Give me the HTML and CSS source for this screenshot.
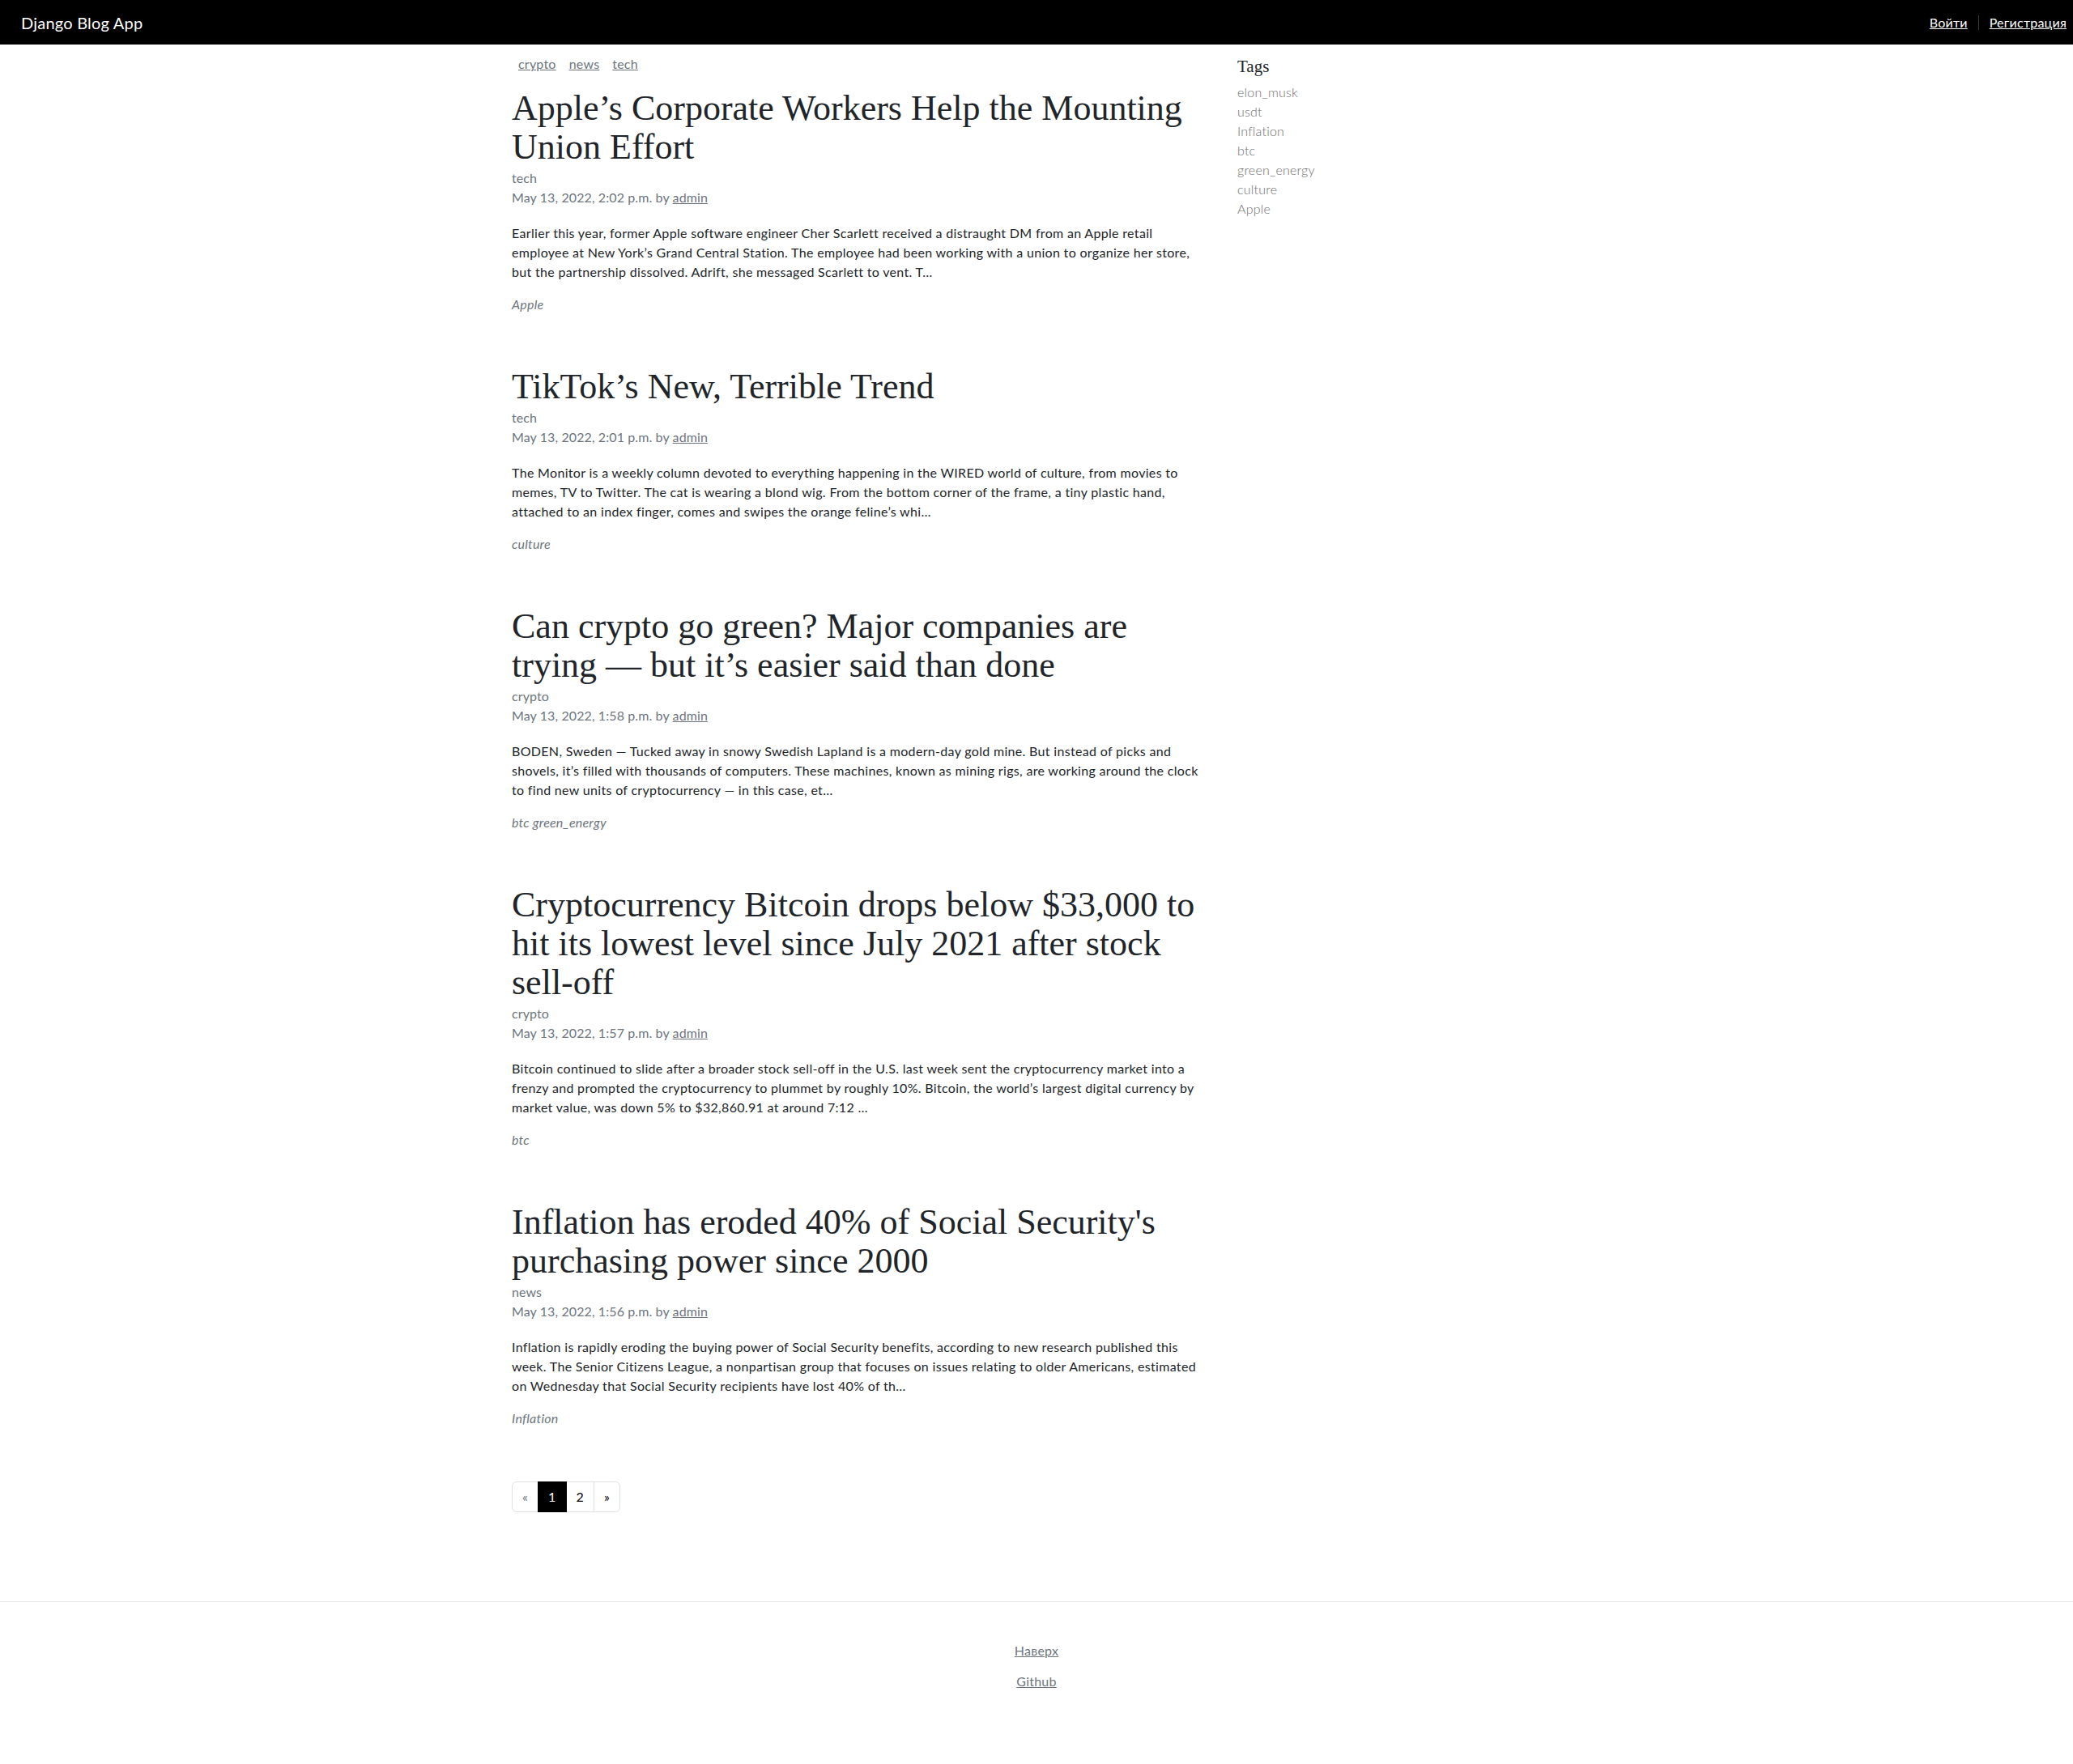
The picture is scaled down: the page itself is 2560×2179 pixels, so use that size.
FILE: index.html
```html
<!DOCTYPE html>
<html lang="ru">
<head>
<meta charset="utf-8">
<title>Django Blog App</title>
<link rel="stylesheet" href="styles.css">
</head>
<body>
<header class="topbar">
  <a class="brand" href="#">Django Blog App</a>
  <div class="auth">
    <a href="#" class="auth-link">Войти</a>
    <span class="auth-sep"></span>
    <a href="#" class="auth-link">Регистрация</a>
  </div>
</header>

<div class="layout">
  <div class="main-col">
    <nav class="catnav">
      <a href="#">crypto</a>
      <a href="#">news</a>
      <a href="#">tech</a>
    </nav>

    <div class="posts">
      <article class="post">
        <h2 class="post-title">Apple’s Corporate Workers Help the Mounting Union Effort</h2>
        <div class="post-cat">tech</div>
        <p class="post-meta">May 13, 2022, 2:02 p.m. by <a href="#">admin</a></p>
        <p class="post-excerpt">Earlier this year, former Apple software engineer Cher Scarlett received a distraught DM from an Apple retail employee at New York’s Grand Central Station. The employee had been working with a union to organize her store, but the partnership dissolved. Adrift, she messaged Scarlett to vent. T…</p>
        <p class="post-tags">Apple</p>
      </article>

      <article class="post">
        <h2 class="post-title">TikTok’s New, Terrible Trend</h2>
        <div class="post-cat">tech</div>
        <p class="post-meta">May 13, 2022, 2:01 p.m. by <a href="#">admin</a></p>
        <p class="post-excerpt">The Monitor is a weekly column devoted to everything happening in the WIRED world of culture, from movies to memes, TV to Twitter. The cat is wearing a blond wig. From the bottom corner of the frame, a tiny plastic hand, attached to an index finger, comes and swipes the orange feline’s whi…</p>
        <p class="post-tags">culture</p>
      </article>

      <article class="post">
        <h2 class="post-title">Can crypto go green? Major companies are trying — but it’s easier said than done</h2>
        <div class="post-cat">crypto</div>
        <p class="post-meta">May 13, 2022, 1:58 p.m. by <a href="#">admin</a></p>
        <p class="post-excerpt">BODEN, Sweden — Tucked away in snowy Swedish Lapland is a modern-day gold mine. But instead of picks and shovels, it’s filled with thousands of computers. These machines, known as mining rigs, are working around the clock to find new units of cryptocurrency — in this case, et…</p>
        <p class="post-tags">btc green_energy</p>
      </article>

      <article class="post">
        <h2 class="post-title">Cryptocurrency Bitcoin drops below $33,000 to hit its lowest level since July 2021 after stock sell-off</h2>
        <div class="post-cat">crypto</div>
        <p class="post-meta">May 13, 2022, 1:57 p.m. by <a href="#">admin</a></p>
        <p class="post-excerpt">Bitcoin continued to slide after a broader stock sell-off in the U.S. last week sent the cryptocurrency market into a frenzy and prompted the cryptocurrency to plummet by roughly 10%. Bitcoin, the world’s largest digital currency by market value, was down 5% to $32,860.91 at around 7:12 …</p>
        <p class="post-tags">btc</p>
      </article>

      <article class="post">
        <h2 class="post-title">Inflation has eroded 40% of Social Security's purchasing power since 2000</h2>
        <div class="post-cat">news</div>
        <p class="post-meta">May 13, 2022, 1:56 p.m. by <a href="#">admin</a></p>
        <p class="post-excerpt">Inflation is rapidly eroding the buying power of Social Security benefits, according to new research published this week. The Senior Citizens League, a nonpartisan group that focuses on issues relating to older Americans, estimated on Wednesday that Social Security recipients have lost 40% of th…</p>
        <p class="post-tags">Inflation</p>
      </article>
    </div>

    <ul class="pager">
      <li class="pager-item is-disabled"><span>«</span></li>
      <li class="pager-item is-active"><span>1</span></li>
      <li class="pager-item"><a href="#">2</a></li>
      <li class="pager-item"><a href="#">»</a></li>
    </ul>
  </div>

  <aside class="side-col">
    <h4 class="side-title">Tags</h4>
    <ul class="tag-list">
      <li><a href="#">elon_musk</a></li>
      <li><a href="#">usdt</a></li>
      <li><a href="#">Inflation</a></li>
      <li><a href="#">btc</a></li>
      <li><a href="#">green_energy</a></li>
      <li><a href="#">culture</a></li>
      <li><a href="#">Apple</a></li>
    </ul>
  </aside>
</div>

<footer class="footer">
  <p><a href="#">Наверх</a></p>
  <p><a href="#">Github</a></p>
</footer>
</body>
</html>
```

FILE: styles.css
```css
* { box-sizing: border-box; }

html, body {
  margin: 0;
  padding: 0;
}

body {
  font-family: "Lato", "Open Sans", sans-serif;
  font-size: 16px;
  line-height: 24px;
  letter-spacing: 0.22px;
  color: #212529;
  background: #fff;
}

a { color: inherit; }

/* top bar */
.topbar {
  height: 55px;
  background: #000;
  display: flex;
  align-items: center;
  justify-content: space-between;
  padding: 0 8px 0 26px;
}

.brand {
  color: #fff;
  text-decoration: none;
  font-size: 20px;
  line-height: 30px;
}

.auth {
  display: flex;
  align-items: center;
  gap: 13px;
}

.auth-link {
  color: #fff;
  font-size: 16px;
  text-decoration: underline;
}

.auth-sep {
  width: 1px;
  height: 18px;
  background: #3a3a3a;
}

/* layout */
.layout {
  width: 1320px;
  margin: 0 auto;
  display: grid;
  grid-template-columns: 880px 440px;
}

.main-col {
  padding: 0 12px;
}

.side-col {
  padding: 15px 12px 0 28px;
}

/* category nav */
.catnav {
  display: flex;
  padding: 12px 0 8px;
  margin-bottom: 11px;
}

.catnav a {
  padding: 0 8px;
  color: #6c757d;
  font-size: 16px;
  line-height: 24px;
}

/* posts */
.post {
  margin-bottom: 66px;
}

.post-title {
  font-family: "Liberation Serif", "Times New Roman", serif;
  font-weight: 400;
  font-size: 44px;
  line-height: 48px;
  letter-spacing: 0;
  margin: 0 0 2px;
  color: #212529;
}

.post-cat {
  color: #6c757d;
  letter-spacing: 0.1px;
}

.post-meta {
  color: #6c757d;
  margin: 0 0 20px;
  letter-spacing: 0.1px;
}

.post-excerpt {
  margin: 0 0 16px;
  letter-spacing: 0.32px;
}

.post-tags {
  margin: 0;
  font-style: italic;
  color: #6c757d;
}

/* pagination */
.pager {
  list-style: none;
  margin: 0;
  padding: 0;
  display: flex;
}

.pager-item > a,
.pager-item > span {
  display: block;
  padding: 6px 12px;
  border: 1px solid #dee2e6;
  margin-left: -1px;
  color: #000;
  text-decoration: none;
  line-height: 24px;
  font-size: 16px;
}

.pager-item:first-child > span {
  margin-left: 0;
  border-radius: 6px 0 0 6px;
}

.pager-item:last-child > a {
  border-radius: 0 6px 6px 0;
}

.pager-item.is-disabled > span {
  color: #6c757d;
}

.pager-item.is-active > span {
  background: #000;
  border-color: #000;
  color: #fff;
  position: relative;
}

/* sidebar */
.side-title {
  font-family: "Liberation Serif", "Times New Roman", serif;
  font-weight: 400;
  font-size: 21px;
  line-height: 24px;
  letter-spacing: 0;
  margin: 0 0 8px;
  color: #212529;
}

.tag-list {
  list-style: none;
  margin: 0;
  padding: 0;
}

.tag-list a {
  color: #6e6e6e;
  text-decoration: none;
  font-weight: 300;
}

/* footer */
.footer {
  margin-top: 110px;
  border-top: 1px solid #e3e3e6;
  padding: 48px 0 40px;
  text-align: center;
}

.footer p {
  margin: 0 0 14px;
}

.footer a {
  color: #6c757d;
}
```
